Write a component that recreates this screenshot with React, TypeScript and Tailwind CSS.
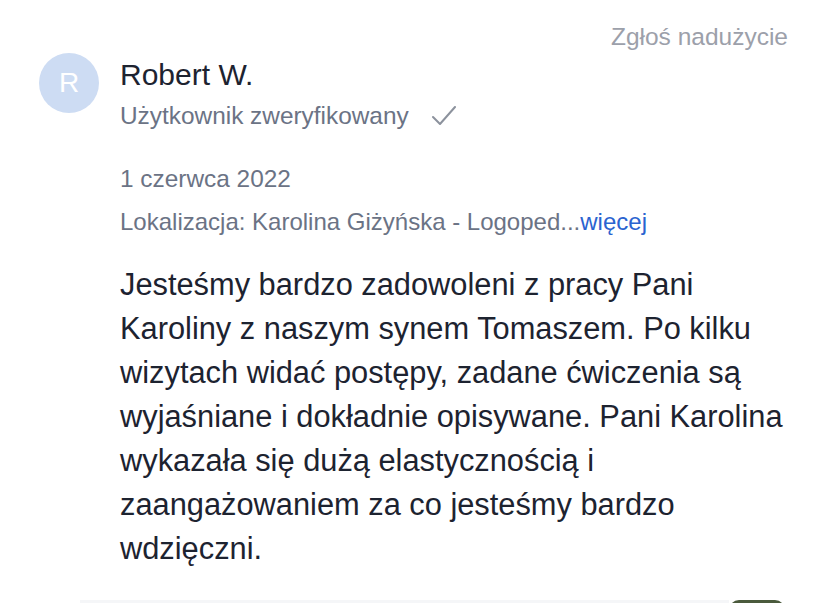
export default function App() {
  return (
    <div
      className="w-[828px] h-[603px] overflow-hidden bg-white"
      style={{ fontFamily: '"Liberation Sans", Arial, sans-serif' }}
    >
      <div className="flex justify-end pr-10 pt-[22px]">
        <span className="text-[24.5px] leading-[30px] text-[#9ca0aa]">Zgłoś nadużycie</span>
      </div>
      <div className="flex pl-[39px] pr-[38px]">
        <div className="w-[60px] h-[60px] rounded-full bg-[#cddcf3] flex items-center justify-center mt-[1px] shrink-0">
          <span className="text-white text-[28px] leading-none">R</span>
        </div>
        <div className="ml-[21px] flex-1">
          <div className="mt-[5px] text-[30px] leading-[36px] text-[#1d2330]">Robert W.</div>
          <div className="mt-[8px] flex items-center text-[24.4px] leading-[30px] text-[#6b7385]">
            <span>Użytkownik zweryfikowany</span>
            <svg className="ml-[23px] w-[24px] h-[20px]" viewBox="0 0 24 20" fill="none">
              <polyline
                points="1,11 8,18 23,1"
                stroke="#8c929d"
                strokeWidth="2"
                strokeLinecap="round"
                strokeLinejoin="round"
              />
            </svg>
          </div>
          <div className="mt-[33px] text-[24.4px] leading-[30px] text-[#6b7385]">1 czerwca 2022</div>
          <div className="mt-[13px] text-[24px] leading-[30px] text-[#6b7385]">
            Lokalizacja: Karolina Giżyńska - Logoped...
            <span className="text-[#2a63d0]">więcej</span>
          </div>
          <p className="mt-[26px] text-[30.8px] leading-[44px] text-[#1d2330]">
            Jesteśmy bardzo zadowoleni z pracy Pani Karoliny z naszym synem Tomaszem. Po kilku
            wizytach widać postępy, zadane ćwiczenia są wyjaśniane i dokładnie opisywane. Pani
            Karolina wykazała się dużą elastycznością i zaangażowaniem za co jesteśmy bardzo
            wdzięczni.
          </p>
        </div>
      </div>
      <div className="flex items-start ml-[80px] mt-[29px] mr-[43px]">
        <div className="flex-1 h-[10px] bg-[#f5f6f8]"></div>
        <div className="w-[56px] h-[10px] rounded-t-[10px] bg-[#4a5a3c]"></div>
      </div>
    </div>
  );
}
